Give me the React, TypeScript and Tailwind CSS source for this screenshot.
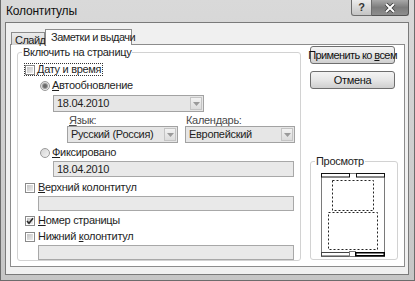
import React from 'react'

function Check({ checked }: { checked?: boolean }) {
  return (
    <span className="flex h-[10px] w-[10px] shrink-0 border border-[#8a8a8a] bg-white p-[1px]">
      <span className="relative flex-1 bg-gradient-to-br from-[#c4c4c4] to-[#ededed]">
        {checked && (
          <svg viewBox="0 0 8 8" className="absolute -left-[1px] -top-[1px] h-[8px] w-[8px]">
            <path d="M1 4 L3 6.3 L7 1.2" fill="none" stroke="#2a2a2a" strokeWidth="1.6" />
          </svg>
        )}
      </span>
    </span>
  )
}

function Radio({ on }: { on?: boolean }) {
  return (
    <span className="flex h-[10px] w-[10px] shrink-0 items-center justify-center rounded-full border border-[#9a9a9a] bg-gradient-to-br from-[#d4d4d4] to-[#f4f4f4]">
      {on && <span className="h-[4px] w-[4px] rounded-full bg-[#6a6a6a] ring-1 ring-[#9c9c9c]" />}
    </span>
  )
}

function Arrow() {
  return (
    <span className="flex h-[13px] w-[12px] items-center justify-center border border-[#c4c4c4] bg-gradient-to-b from-[#f2f2f2] to-[#dcdcdc]">
      <svg viewBox="0 0 7 4" className="h-[4px] w-[7px]">
        <path d="M0 0 H7 L3.5 4 Z" fill="#9a9a9a" />
      </svg>
    </span>
  )
}

function Select({ value, className }: { value: string; className: string }) {
  return (
    <div className={`flex h-[17px] items-center justify-between border border-[#a2a2a2] bg-[#e6e6e6] pl-[3px] pr-[1px] ${className}`}>
      <span>{value}</span>
      <Arrow />
    </div>
  )
}

function Field({ value, className }: { value?: string; className: string }) {
  return (
    <div className={`flex items-center border border-[#a8a8a8] bg-[#e9e9e9] pl-[3px] ${className}`}>
      {value}
    </div>
  )
}

function Button({ children }: { children: React.ReactNode }) {
  return (
    <div className="flex h-[18px] w-[85px] items-center justify-center rounded-[3px] border border-[#6e6e6e] bg-gradient-to-b from-[#f4f4f4] via-[#e6e6e6] to-[#cfcfcf] text-[#111]">
      {children}
    </div>
  )
}

export default function App() {
  return (
    <div className="flex h-[281px] w-[415px] flex-col whitespace-nowrap border-x border-b border-[#6c6c6c] bg-gradient-to-b from-[#d9d9d9] to-[#c6c6c6] font-['Liberation_Sans',Arial,sans-serif] text-[11px] leading-[13px] tracking-[-0.3px] text-[#1e1e1e]">
      {/* title bar */}
      <div className="flex h-[22px] items-start justify-between">
        <span className="pl-[5px] pt-[5px] text-[12px] tracking-[-0.2px] text-[#111]">Колонтитулы</span>
        <div className="flex pr-[5px]">
          <div className="flex h-[16px] w-[21px] items-center justify-center rounded-bl-[3px] border border-t-0 border-[#6d6d6d] bg-gradient-to-b from-[#ececec] to-[#c4c4c4] text-[11px] font-bold text-[#333]">
            ?
          </div>
          <div className="flex h-[16px] w-[37px] items-center justify-center rounded-br-[3px] border border-l-0 border-t-0 border-[#555] bg-gradient-to-b from-[#a9a9a9] via-[#7c7c7c] to-[#8e8e8e]">
            <svg viewBox="0 0 12 10" className="h-[10px] w-[12px]">
              <path d="M2 1 L10 9 M10 1 L2 9" stroke="#3a3a3a" strokeWidth="3.6" />
              <path d="M2 1 L10 9 M10 1 L2 9" stroke="#fff" strokeWidth="2" />
            </svg>
          </div>
        </div>
      </div>

      {/* client area */}
      <div className="ml-[4px] mr-[5px] h-[253px] border border-[#7a7a7a] bg-[#f0f0f0] pl-[4px] pr-[3px] pt-[6px]">
        {/* tabs */}
        <div className="flex h-[16px] items-end pl-[1px]">
          <div className="h-[13px] w-[34px] border border-b-0 border-[#8c8c8c] bg-gradient-to-b from-[#ececec] to-[#d4d4d4] pl-[3px] pt-[1px] tracking-[-0.5px] text-[#222]">
            Слайд
          </div>
          <div className="relative z-10 h-[16px] w-[87px] border border-b-0 border-[#8c8c8c] bg-white pl-[5px] pt-[1px] tracking-[-0.5px]">
            Заметки и выдачи
          </div>
        </div>

        {/* tab page */}
        <div className="-mt-[1px] flex h-[223px] border border-[#8c8c8c] bg-white">
          <fieldset className="ml-[6px] mt-[1px] h-[215px] w-[284px] rounded-[3px] border border-[#d2d2d2]">
            <legend className="ml-[4px] px-[1px]">Включить на страницу</legend>

            <div className="ml-[6px] mt-[4px] flex h-[13px] w-fit items-center gap-[2px] border border-dotted border-[#333] pr-[1px]">
              <Check />
              <span>
                <u>Д</u>ату и время
              </span>
            </div>

            <div className="ml-[22px] mt-[3px] flex h-[13px] items-center gap-[2px]">
              <Radio on />
              <span>
                <u>А</u>втообновление
              </span>
            </div>

            <Select value="18.04.2010" className="ml-[35px] mt-[3px] w-[151px]" />

            <div className="ml-[49px] mt-[2px] flex h-[12px] gap-[7px] text-[#4a4a4a]">
              <span className="w-[111px] pl-[2px]">
                <u>Я</u>зык:
              </span>
              <span className="w-[110px] pl-[1px]">
                Кален<u>д</u>арь:
              </span>
            </div>
            <div className="ml-[49px] flex gap-[7px]">
              <Select value="Русский (Россия)" className="w-[111px]" />
              <Select value="Европейский" className="w-[110px]" />
            </div>

            <div className="ml-[22px] mt-[3px] flex h-[13px] items-center gap-[2px]">
              <Radio />
              <span>
                <u>Ф</u>иксировано
              </span>
            </div>
            <Field value="18.04.2010" className="ml-[35px] mt-[2px] h-[16px] w-[241px]" />

            <div className="ml-[7px] mt-[4px] flex h-[13px] items-center gap-[3px]">
              <Check />
              <span>
                <u>В</u>ерхний колонтитул
              </span>
            </div>
            <Field className="ml-[20px] mt-[2px] h-[15px] w-[256px]" />

            <div className="ml-[7px] mt-[3px] flex h-[13px] items-center gap-[3px]">
              <Check checked />
              <span>
                <u>Н</u>омер страницы
              </span>
            </div>
            <div className="ml-[7px] mt-[3px] flex h-[13px] items-center gap-[3px]">
              <Check />
              <span>
                Нижний <u>к</u>олонтитул
              </span>
            </div>
            <Field className="ml-[20px] mt-[2px] h-[15px] w-[256px]" />
          </fieldset>

          <div className="ml-[9px] flex w-[88px] flex-col pt-[1px]">
            <Button>
              <span className="tracking-[-0.6px]">
                Применить ко <u>в</u>сем
              </span>
            </Button>
            <div className="mt-[7px]">
              <Button>Отмена</Button>
            </div>

            <fieldset className="mt-[66px] h-[105px] w-[88px] rounded-[3px] border border-[#d2d2d2]">
              <legend className="ml-[4px] px-[1px]">Просмотр</legend>
              <svg viewBox="0 0 64 84" className="ml-[10px] mt-[5px] h-[84px] w-[64px]">
                <rect x="0.5" y="0.5" width="63" height="83" fill="#fff" stroke="#7a7a7a" />
                <rect x="0.5" y="0.5" width="28" height="3.5" fill="#fff" stroke="#111" />
                <rect x="35.5" y="0.5" width="28" height="3.5" fill="#fff" stroke="#111" />
                <rect x="11.5" y="7.5" width="41" height="30" fill="none" stroke="#222" strokeDasharray="2 2" />
                <rect x="7.5" y="39.5" width="49" height="37" fill="none" stroke="#222" strokeDasharray="2 2" />
                <rect x="0.5" y="79.5" width="28" height="3.5" fill="#fff" stroke="#444" />
                <rect x="28.5" y="78.5" width="6" height="5" fill="#fff" stroke="#777" />
                <rect x="34.75" y="79.75" width="28.5" height="3" fill="#fff" stroke="#000" strokeWidth="1.5" />
              </svg>
            </fieldset>
          </div>
        </div>
      </div>
    </div>
  )
}
